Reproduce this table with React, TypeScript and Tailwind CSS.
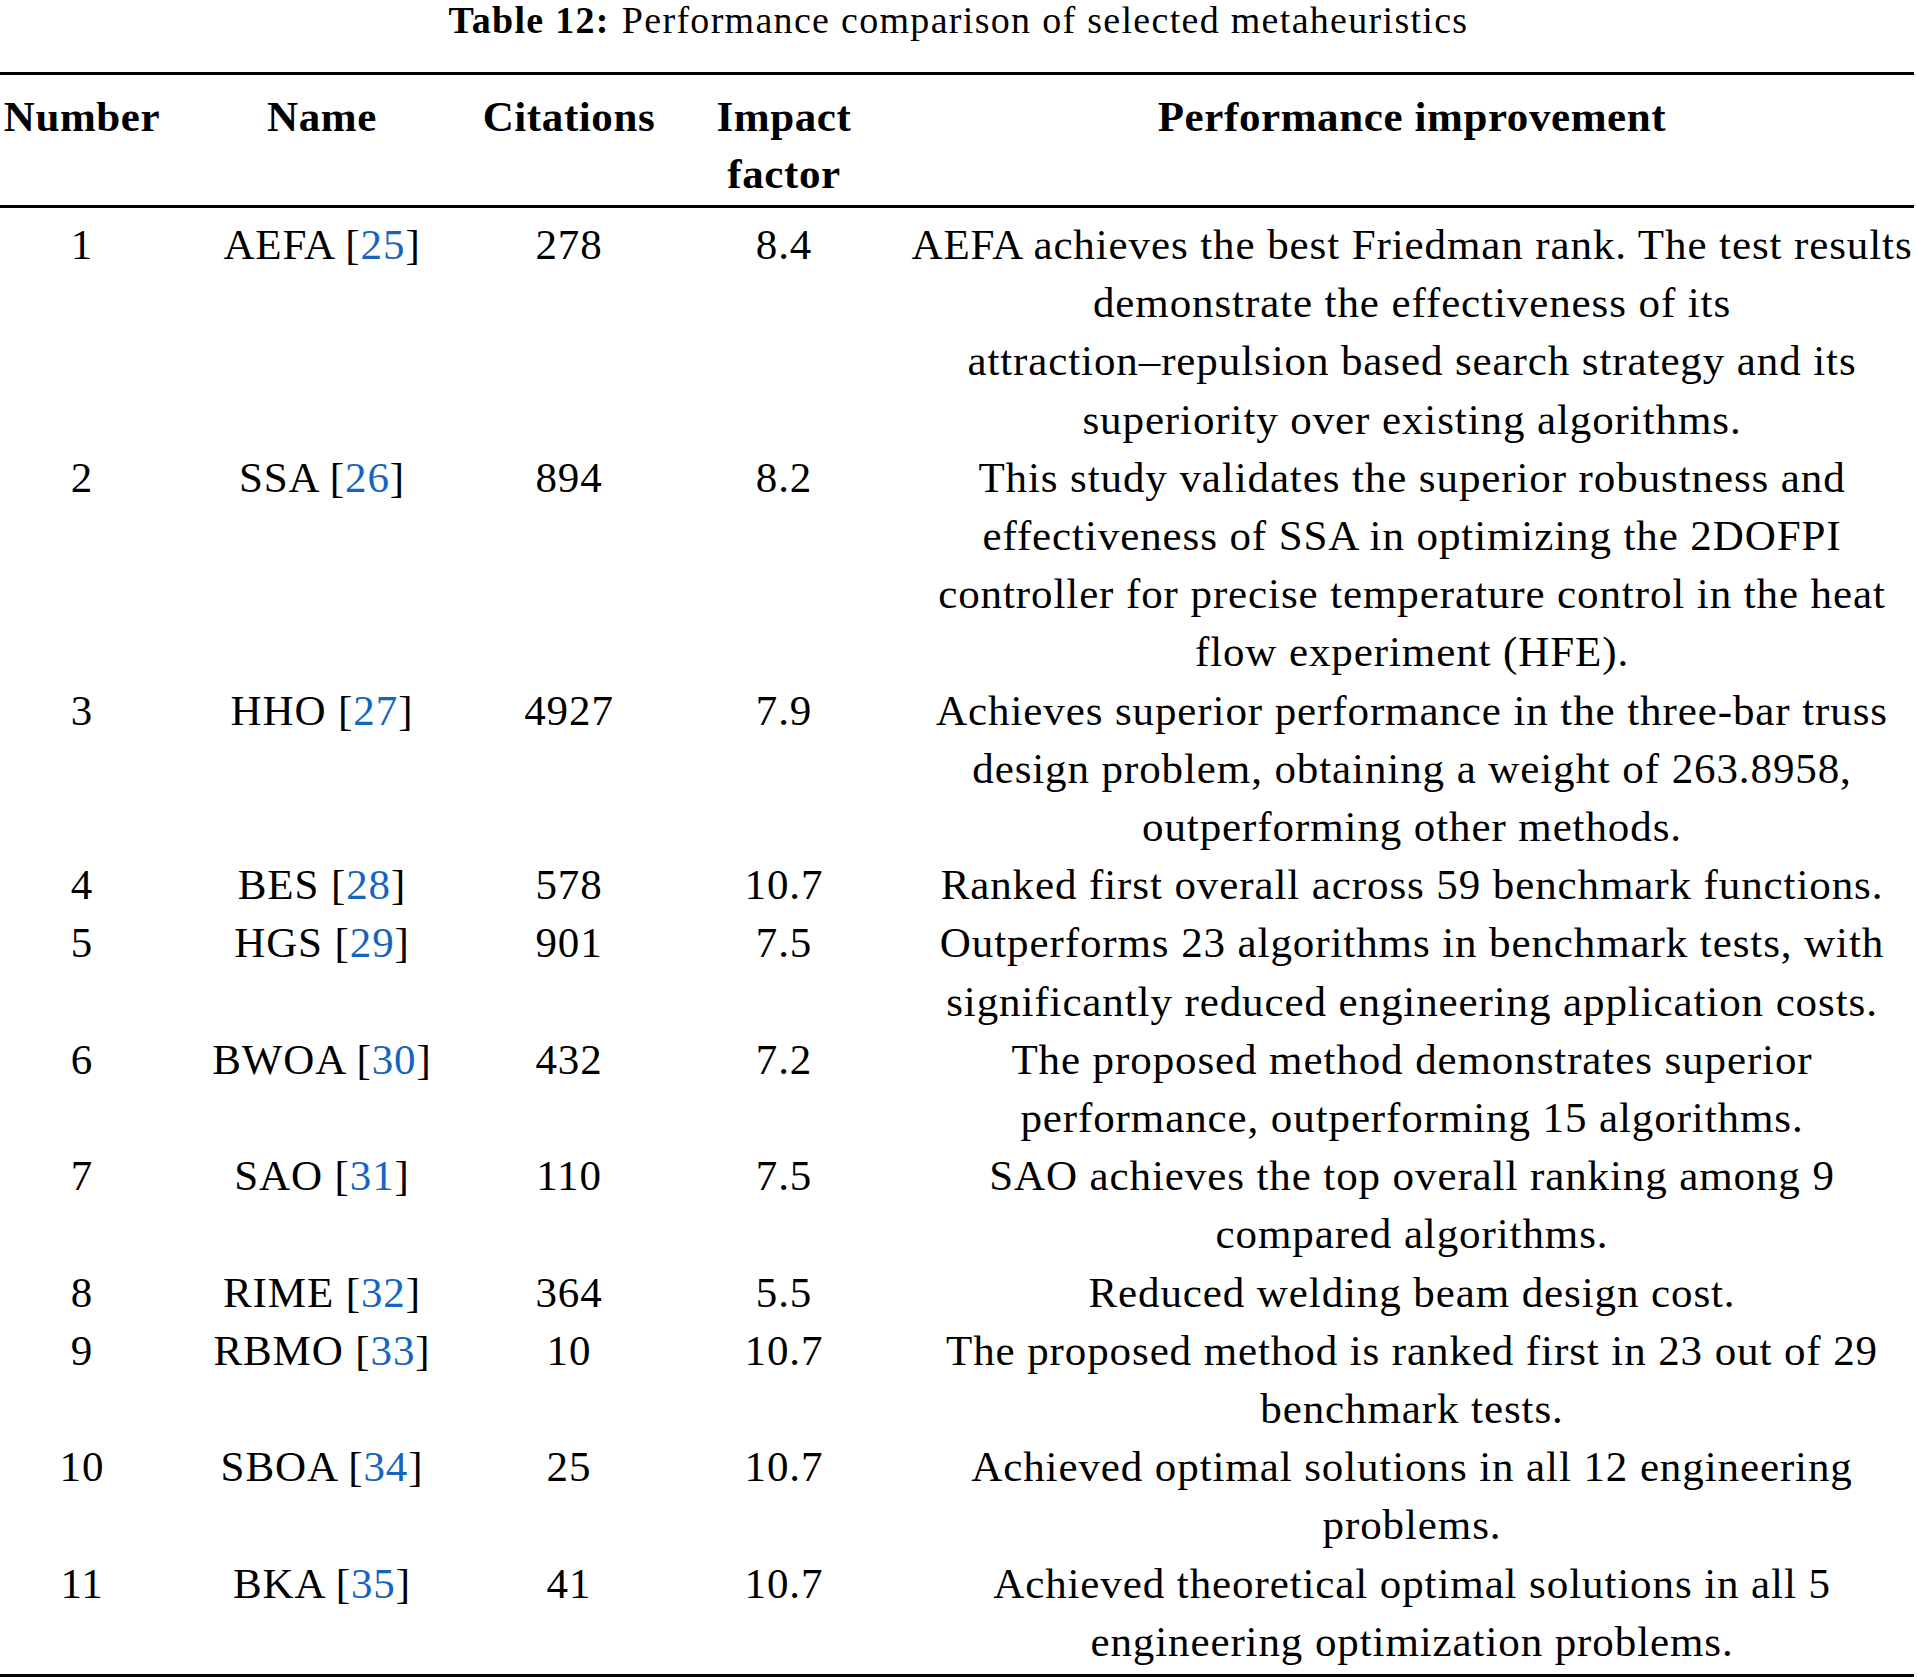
import React from "react";

const rows = [
  { n: "1", name: "AEFA", ref: "25", cit: "278", ifac: "8.4", lines: ["AEFA achieves the best Friedman rank. The test results", "demonstrate the effectiveness of its", "attraction–repulsion based search strategy and its", "superiority over existing algorithms."] },
  { n: "2", name: "SSA", ref: "26", cit: "894", ifac: "8.2", lines: ["This study validates the superior robustness and", "effectiveness of SSA in optimizing the 2DOFPI", "controller for precise temperature control in the heat", "flow experiment (HFE)."] },
  { n: "3", name: "HHO", ref: "27", cit: "4927", ifac: "7.9", lines: ["Achieves superior performance in the three-bar truss", "design problem, obtaining a weight of 263.8958,", "outperforming other methods."] },
  { n: "4", name: "BES", ref: "28", cit: "578", ifac: "10.7", lines: ["Ranked first overall across 59 benchmark functions."] },
  { n: "5", name: "HGS", ref: "29", cit: "901", ifac: "7.5", lines: ["Outperforms 23 algorithms in benchmark tests, with", "significantly reduced engineering application costs."] },
  { n: "6", name: "BWOA", ref: "30", cit: "432", ifac: "7.2", lines: ["The proposed method demonstrates superior", "performance, outperforming 15 algorithms."] },
  { n: "7", name: "SAO", ref: "31", cit: "110", ifac: "7.5", lines: ["SAO achieves the top overall ranking among 9", "compared algorithms."] },
  { n: "8", name: "RIME", ref: "32", cit: "364", ifac: "5.5", lines: ["Reduced welding beam design cost."] },
  { n: "9", name: "RBMO", ref: "33", cit: "10", ifac: "10.7", lines: ["The proposed method is ranked first in 23 out of 29", "benchmark tests."] },
  { n: "10", name: "SBOA", ref: "34", cit: "25", ifac: "10.7", lines: ["Achieved optimal solutions in all 12 engineering", "problems."] },
  { n: "11", name: "BKA", ref: "35", cit: "41", ifac: "10.7", lines: ["Achieved theoretical optimal solutions in all 5", "engineering optimization problems."] },
];

const GRID = "grid grid-cols-[164px_316px_178px_252px_1fr] text-center";

export default function App() {
  return (
    <div className="w-[1917px] h-[1677px] bg-white text-black font-['Liberation_Serif',serif] overflow-hidden">
      <div className="h-[40px] flex items-center justify-center text-[38px] tracking-[1.3px] leading-none">
        <span className="font-bold">Table 12:</span>
        <span className="ml-3">Performance comparison of selected metaheuristics</span>
      </div>
      <div className="w-[1914px] mt-[32px] border-t-[3px] border-b-[3px] border-black">
        <div className={`${GRID} border-b-[3px] border-black pt-[13px] pb-[3px] text-[43px] tracking-[0.6px] leading-[57px] font-bold`}>
          <div>Number</div>
          <div>Name</div>
          <div>Citations</div>
          <div>
            Impact
            <br />
            factor
          </div>
          <div>Performance improvement</div>
        </div>
        <div className="pt-[8px] pb-[3px] text-[43px] tracking-[0.9px] leading-[58.2px]">
          {rows.map((r) => (
            <div key={r.n} className={GRID}>
              <div>{r.n}</div>
              <div>
                {r.name} [<span className="text-[#1565c0]">{r.ref}</span>]
              </div>
              <div>{r.cit}</div>
              <div>{r.ifac}</div>
              <div className="whitespace-nowrap">
                {r.lines.map((l, i) => (
                  <div key={i}>{l}</div>
                ))}
              </div>
            </div>
          ))}
        </div>
      </div>
    </div>
  );
}
